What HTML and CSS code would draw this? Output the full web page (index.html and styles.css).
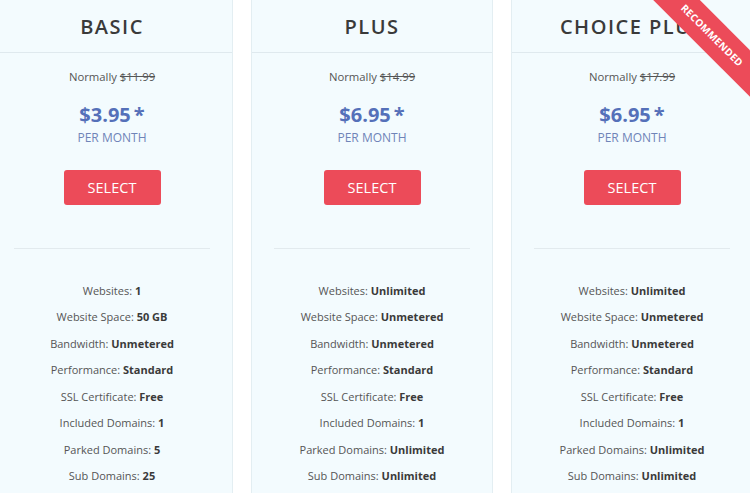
FILE: index.html
```html
<!DOCTYPE html>
<html>
<head>
<meta charset="utf-8">
<link rel="stylesheet" href="styles.css">
</head>
<body>
<div class="plans">
  <div class="card">
    <div class="card-head"><h2 class="title">BASIC</h2></div>
    <div class="card-body">
      <div class="normally">Normally <s>$11.99</s></div>
      <div class="price">$3.95<span class="star">*</span></div>
      <div class="per">PER MONTH</div>
      <a class="btn">SELECT</a>
      <div class="divider"></div>
      <ul class="features">
        <li>Websites: <b>1</b></li>
        <li>Website Space: <b>50 GB</b></li>
        <li>Bandwidth: <b>Unmetered</b></li>
        <li>Performance: <b>Standard</b></li>
        <li>SSL Certificate: <b>Free</b></li>
        <li>Included Domains: <b>1</b></li>
        <li>Parked Domains: <b>5</b></li>
        <li>Sub Domains: <b>25</b></li>
      </ul>
    </div>
  </div>
  <div class="card">
    <div class="card-head"><h2 class="title">PLUS</h2></div>
    <div class="card-body">
      <div class="normally">Normally <s>$14.99</s></div>
      <div class="price">$6.95<span class="star">*</span></div>
      <div class="per">PER MONTH</div>
      <a class="btn">SELECT</a>
      <div class="divider"></div>
      <ul class="features">
        <li>Websites: <b>Unlimited</b></li>
        <li>Website Space: <b>Unmetered</b></li>
        <li>Bandwidth: <b>Unmetered</b></li>
        <li>Performance: <b>Standard</b></li>
        <li>SSL Certificate: <b>Free</b></li>
        <li>Included Domains: <b>1</b></li>
        <li>Parked Domains: <b>Unlimited</b></li>
        <li>Sub Domains: <b>Unlimited</b></li>
      </ul>
    </div>
  </div>
  <div class="card card-featured">
    <div class="ribbon">RECOMMENDED</div>
    <div class="card-head"><h2 class="title">CHOICE PLUS</h2></div>
    <div class="card-body">
      <div class="normally">Normally <s>$17.99</s></div>
      <div class="price">$6.95<span class="star">*</span></div>
      <div class="per">PER MONTH</div>
      <a class="btn">SELECT</a>
      <div class="divider"></div>
      <ul class="features">
        <li>Websites: <b>Unlimited</b></li>
        <li>Website Space: <b>Unmetered</b></li>
        <li>Bandwidth: <b>Unmetered</b></li>
        <li>Performance: <b>Standard</b></li>
        <li>SSL Certificate: <b>Free</b></li>
        <li>Included Domains: <b>1</b></li>
        <li>Parked Domains: <b>Unlimited</b></li>
        <li>Sub Domains: <b>Unlimited</b></li>
      </ul>
    </div>
  </div>
</div>
</body>
</html>
```
FILE: styles.css
```css
html, body {
  margin: 0;
  padding: 0;
  background: #ffffff;
  overflow: hidden;
  height: 493px;
  font-family: "Open Sans", "Noto Sans", sans-serif;
}

.plans {
  display: flex;
  gap: 18px;
  margin-left: -9px;
  width: 762px;
  align-items: stretch;
}

.card {
  position: relative;
  overflow: hidden;
  flex: 0 0 242px;
  box-sizing: border-box;
  height: 493px;
  background: #f3fbfe;
  border-left: 1px solid #e3eef2;
  border-right: 1px solid #e3eef2;
}

.card-head {
  height: 53px;
  box-sizing: border-box;
  border-bottom: 1px solid #dfe9ee;
  display: flex;
  align-items: center;
  justify-content: center;
}

.title {
  margin: 0;
  font-size: 20px;
  font-weight: 600;
  letter-spacing: 1.5px;
  color: #3a3a3a;
  line-height: 28px;
  padding-top: 1px;
}

.card-body {
  padding: 0 22px;
  text-align: center;
}

.normally {
  margin-top: 15px;
  font-size: 11.3px;
  line-height: 17px;
  color: #555555;
}

.normally s {
  color: #555555;
}

.price {
  margin-top: 18px;
  font-size: 20px;
  line-height: 24px;
  font-weight: 700;
  color: #5570b9;
}

.star {
  margin-left: 3px;
}

.per {
  margin-top: 2px;
  font-size: 12px;
  line-height: 17px;
  color: #6f84b8;
}

.btn {
  display: block;
  margin: 24px auto 0;
  width: 97px;
  height: 35px;
  line-height: 35px;
  box-sizing: border-box;
  background: #ec4b59;
  color: #ffffff;
  border-radius: 3px;
  font-size: 14.5px;
}

.divider {
  margin-top: 43px;
  border-top: 1px solid #e2eaee;
}

.features {
  list-style: none;
  margin: 0;
  padding: 29px 0 0;
  font-size: 11px;
  color: #555555;
}

.features li {
  line-height: 26.45px;
}

.features b {
  font-weight: 700;
  color: #3a3a3a;
}

.ribbon {
  position: absolute;
  left: 115px;
  top: 19px;
  width: 170px;
  height: 33px;
  line-height: 33px;
  background: #ec4b59;
  color: #ffffff;
  font-size: 10px;
  font-weight: 700;
  text-align: center;
  letter-spacing: 0.3px;
  transform: rotate(45deg);
  z-index: 2;
}
```
